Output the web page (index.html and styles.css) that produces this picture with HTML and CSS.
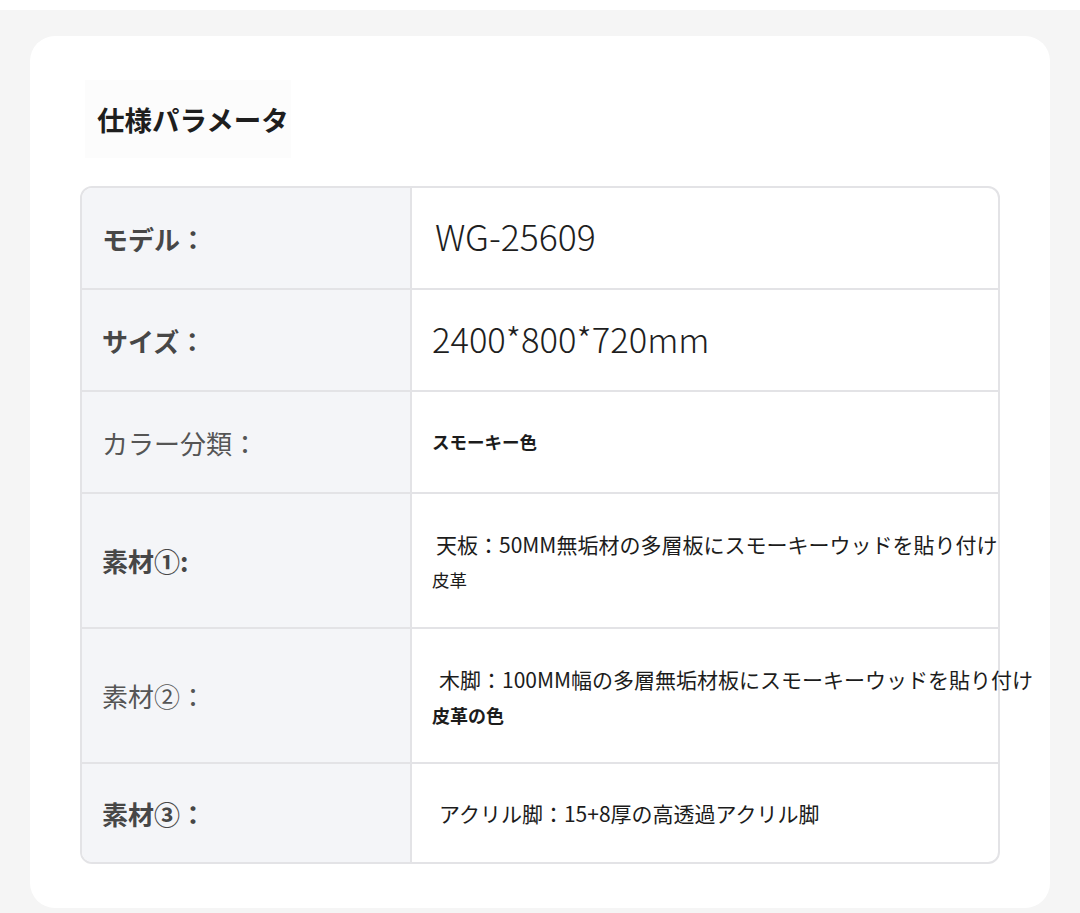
FILE: index.html
```html
<!DOCTYPE html>
<html lang="ja">
<head>
<meta charset="utf-8">
<title>仕様パラメータ</title>
<link rel="stylesheet" href="styles.css">
</head>
<body>
<div class="page">
  <section class="card">
    <h2 class="title">仕様パラメータ</h2>
    <div class="spec">
      <div class="row first">
        <div class="label bold">モデル：</div>
        <div class="value"><span class="latin">WG-25609</span></div>
      </div>
      <div class="row">
        <div class="label bold">サイズ：</div>
        <div class="value"><span class="latin size">2400*800*720mm</span></div>
      </div>
      <div class="row">
        <div class="label">カラー分類：</div>
        <div class="value"><span class="small strong solo">スモーキー色</span></div>
      </div>
      <div class="row tall">
        <div class="label bold">素材①:</div>
        <div class="value">
          <span class="main">天板：50MM無垢材の多層板にスモーキーウッドを貼り付け</span>
          <span class="small">皮革</span>
        </div>
      </div>
      <div class="row tall">
        <div class="label">素材②：</div>
        <div class="value">
          <span class="main shift">木脚：100MM幅の多層無垢材板にスモーキーウッドを貼り付け</span>
          <span class="small strong">皮革の色</span>
        </div>
      </div>
      <div class="row last">
        <div class="label bold">素材③：</div>
        <div class="value"><span class="main shift">アクリル脚：15+8厚の高透過アクリル脚</span></div>
      </div>
    </div>
  </section>
</div>
</body>
</html>
```

FILE: styles.css
```css
* { box-sizing: border-box; }
html, body {
  margin: 0;
  padding: 0;
  background: #ffffff;
  font-family: "Noto Sans CJK JP", "Noto Sans", sans-serif;
}
.page {
  margin-top: 10px;
  background: #f5f5f5;
  padding: 26px 30px 5px 30px;
  min-height: 903px;
}
.card {
  background: #ffffff;
  border-radius: 25px;
  padding: 44px 50px 44px 50px;
}
.title {
  display: inline-block;
  margin: 0 0 28px 5px;
  padding: 20px 2px 20px 12px;
  height: 78px;
  font-size: 27.5px;
  line-height: 38px;
  font-weight: 700;
  color: #1e1e1e;
  background: #fcfcfc;
}
.spec {
  border: 2px solid #e3e3e6;
  border-radius: 12px;
}
.row {
  display: grid;
  grid-template-columns: 330px 1fr;
  height: 102px;
  border-bottom: 2px solid #e3e3e6;
}
.row.tall { height: 135px; }
.row.last { height: 98px; border-bottom: 0; }
.label {
  background: #f4f5f8;
  border-right: 2px solid #e3e3e6;
  display: flex;
  align-items: center;
  padding-left: 20px;
  font-size: 26px;
  color: #555555;
  font-weight: 400;
}
.label.bold { font-weight: 700; color: #474747; }
.row.first .label { border-top-left-radius: 10px; }
.row.last .label { border-bottom-left-radius: 10px; }
.value {
  display: flex;
  flex-direction: column;
  justify-content: center;
  align-items: flex-start;
  padding-left: 20px;
  white-space: nowrap;
  color: #1c1c1c;
}
.latin {
  font-family: "Noto Sans CJK JP", "Noto Sans", sans-serif;
  font-weight: 300;
  font-size: 35.5px;
  line-height: 40px;
  padding: 0 0 4px 3px;
  color: #1e1e1e;
}
.latin.size { font-size: 34.5px; padding-left: 0; }
.main {
  font-size: 21px;
  line-height: 30px;
  padding-left: 4px;
  color: #1c1c1c;
}
.main.shift { padding-left: 7px; }
.small {
  font-size: 17.5px;
  line-height: 26px;
  margin-top: 8px;
  color: #1c1c1c;
}
.small.solo { margin-top: 0; }
.small.strong { font-weight: 700; font-size: 18px; }
.small.strong.solo { font-size: 17.5px; }
```
